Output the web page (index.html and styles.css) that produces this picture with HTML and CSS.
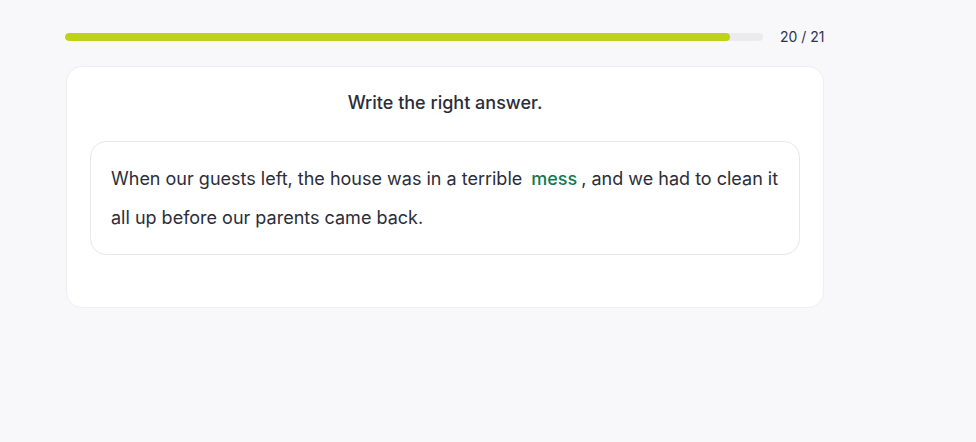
FILE: index.html
```html
<!DOCTYPE html>
<html>
<head>
<meta charset="utf-8">
<link rel="stylesheet" href="styles.css">
</head>
<body>
<div class="wrap">
  <div class="progress-row">
    <div class="track"><div class="fill" style="width:95.3%"></div></div>
    <span class="count">20 / 21</span>
  </div>
  <div class="card">
    <h2 class="title">Write the right answer.</h2>
    <div class="box">
      <p class="sentence">When our guests left, the house was in a terrible <span class="answer">mess</span>, and we had to clean it all up before our parents came back.</p>
    </div>
  </div>
</div>
</body>
</html>
```
FILE: styles.css
```css
html, body { margin: 0; padding: 0; }
body {
  background: #f8f8fa;
  font-family: Inter, "Noto Sans", sans-serif;
  color: #2b2d3a;
  width: 976px;
  height: 442px;
}
.wrap {
  width: 760px;
  margin-left: 65px;
  padding-top: 33px;
}
.progress-row {
  display: flex;
  align-items: center;
  height: 8px;
}
.track {
  width: 698px;
  height: 8px;
  background: #ebebed;
  border-radius: 4px;
  overflow: hidden;
}
.fill {
  height: 100%;
  background: #bfd21b;
  border-radius: 4px;
}
.count {
  margin-left: 17px;
  font-size: 14px;
  color: #2b3450;
  line-height: 16px;
}
.card {
  margin-top: 25px;
  margin-left: 1px;
  width: 758px;
  background: #fff;
  border: 1px solid #efeff1;
  border-radius: 16px;
  padding: 24px 23px 52px;
  box-sizing: border-box;
}
.title {
  margin: 0;
  text-align: center;
  font-size: 18px;
  font-weight: 500;
  line-height: 24px;
  color: #2b2d3a;
}
.box {
  margin-top: 26px;
  border: 1px solid #e8e8ea;
  border-radius: 16px;
  padding: 17px 14px 17px 20px;
}
.sentence {
  margin: 0;
  font-size: 18px;
  line-height: 39px;
  color: #2b2d3a;
}
.answer {
  color: #117a52;
  font-weight: 500;
  padding: 0 4px 0 4px;
}
```
